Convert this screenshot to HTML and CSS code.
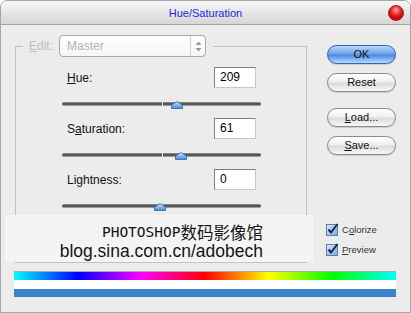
FILE: index.html
```html
<!DOCTYPE html>
<html lang="en">
<head>
    <meta charset="UTF-8">
    <title>Hue/Saturation</title>
    <link rel="stylesheet" href="styles.css">
</head>
<body>
    <div class="window">
        <div class="titlebar">
            <span class="title">Hue/Saturation</span>
            <span class="close"></span>
        </div>

        <div class="main">
            <fieldset class="group">
                <legend>
                    <span class="edit-label"><u>E</u>dit:</span>
                    <span class="select">
                        <span class="select-value">Master</span>
                        <span class="select-arrows">
                            <svg width="7" height="11" viewBox="0 0 7 11"><path d="M0.5 4 L3.5 0.5 L6.5 4 Z M0.5 7 L3.5 10.5 L6.5 7 Z" fill="#9a9a9a"/></svg>
                        </span>
                    </span>
                </legend>

                <div class="ctrls">
                    <div class="ctrl-row">
                        <span class="lbl"><u>H</u>ue:</span>
                        <span class="num">209</span>
                    </div>
                    <div class="slider">
                        <div class="track"></div>
                        <span class="tick"></span>
                        <span class="thumb" style="left: 57.8%"><svg width="12" height="8" viewBox="0 0 12 8"><defs><linearGradient id="tg1" x1="0" y1="0" x2="0" y2="1"><stop offset="0" stop-color="#e4eefb"/><stop offset="0.5" stop-color="#8db5ea"/><stop offset="1" stop-color="#4f86d2"/></linearGradient></defs><path d="M0.5 7.5 V4.2 L6 0.5 L11.5 4.2 V7.5 Z" fill="url(#tg1)" stroke="#4a74ad"/></svg></span>
                    </div>

                    <div class="ctrl-row">
                        <span class="lbl">S<u>a</u>turation:</span>
                        <span class="num">61</span>
                    </div>
                    <div class="slider">
                        <div class="track"></div>
                        <span class="tick"></span>
                        <span class="thumb" style="left: 59.8%"><svg width="12" height="8" viewBox="0 0 12 8"><path d="M0.5 7.5 V4.2 L6 0.5 L11.5 4.2 V7.5 Z" fill="url(#tg1)" stroke="#4a74ad"/></svg></span>
                    </div>

                    <div class="ctrl-row">
                        <span class="lbl">Li<u>g</u>htness:</span>
                        <span class="num">0</span>
                    </div>
                    <div class="slider">
                        <div class="track"></div>
                        <span class="tick"></span>
                        <span class="thumb" style="left: 49.2%"><svg width="12" height="8" viewBox="0 0 12 8"><path d="M0.5 7.5 V4.2 L6 0.5 L11.5 4.2 V7.5 Z" fill="url(#tg1)" stroke="#4a74ad"/></svg></span>
                    </div>
                </div>
            </fieldset>

            <div class="side">
                <div class="btn btn-ok">OK</div>
                <div class="btn btn-reset">Reset</div>
                <div class="btn btn-load"><u>L</u>oad...</div>
                <div class="btn btn-save"><u>S</u>ave...</div>

                <div class="checks">
                    <div class="check">
                        <svg width="13" height="13" viewBox="0 0 13 13"><defs><linearGradient id="cb" x1="0" y1="0" x2="1" y2="1"><stop offset="0" stop-color="#dfe9f8"/><stop offset="1" stop-color="#7fa6dc"/></linearGradient></defs><rect x="0.5" y="1.5" width="11" height="11" fill="url(#cb)" stroke="#5d7fae"/><path d="M2.5 6.5 L5 9.5 L11.5 1" fill="none" stroke="#18254a" stroke-width="2"/></svg>
                        <span>C<u>o</u>lorize</span>
                    </div>
                    <div class="check">
                        <svg width="13" height="13" viewBox="0 0 13 13"><rect x="0.5" y="1.5" width="11" height="11" fill="url(#cb)" stroke="#5d7fae"/><path d="M2.5 6.5 L5 9.5 L11.5 1" fill="none" stroke="#18254a" stroke-width="2"/></svg>
                        <span><u>P</u>review</span>
                    </div>
                </div>
            </div>
        </div>

        <div class="bars">
            <div class="bar-hue"></div>
            <div class="bar-white"></div>
            <div class="bar-result"></div>
        </div>

        <!-- watermark over the dialog -->
        <div class="watermark">
            <div class="wm-line1"><span class="wm-latin">PHOTOSHOP</span><span class="wm-cn">数码影像馆</span></div>
            <div class="wm-line2">blog.sina.com.cn/adobech</div>
        </div>
    </div>
</body>
</html>
```

FILE: styles.css
```css
body {
    margin: 0;
    background-color: #fff;
    font-family: "Liberation Sans", Arial, sans-serif;
    color: #000;
}
.window {
    position: relative;
    width: 411px;
    height: 313px;
    box-sizing: border-box;
    border: 1px solid #a6a6a6;
    border-radius: 7px 7px 0 0;
    background-color: #ececec;
    overflow: hidden;
}
.titlebar {
    height: 23px;
    border-bottom: 1px solid #a3a3a3;
    background: linear-gradient(#f7f7f7, #d6d6d6);
    display: grid;
    grid-template-columns: 1fr auto 1fr;
    align-items: center;
}
.title {
    grid-column: 2;
    color: #2424e8;
    font-size: 11px;
}
.close {
    grid-column: 3;
    justify-self: end;
    margin-right: 6px;
    width: 14px;
    height: 14px;
    border-radius: 50%;
    border: 1px solid #9b2020;
    background: radial-gradient(circle at 50% 30%, #ffb0b0 0, #f03030 35%, #c80000 70%, #e84a4a 100%);
}
.main {
    display: flex;
    height: 246px;
}
.group {
    margin: 10px 0 0 14px;
    padding: 0 0 0 7px;
    width: 292px;
    height: 228px;
    min-width: 0;
    box-sizing: border-box;
    border: 1px solid #c2c2c2;
}
.group legend {
    padding: 0 7px 0 6px;
    font-size: 0;
}
.edit-label {
    display: inline-block;
    vertical-align: middle;
    font-size: 12px;
    color: #bcbcbc;
    margin-right: 6px;
}
.select {
    display: inline-flex;
    vertical-align: middle;
    width: 147px;
    height: 22px;
    box-sizing: border-box;
    border: 1px solid #aaaaaa;
    border-radius: 4px;
    background: linear-gradient(#ffffff, #f6f6f6);
}
.select-value {
    flex: 1;
    font-size: 12px;
    line-height: 20px;
    color: #b3b3b3;
    padding-left: 7px;
}
.select-arrows {
    width: 14px;
    border-left: 1px solid #cfcfcf;
    display: flex;
    align-items: center;
    justify-content: center;
}
.ctrls {
    margin: 10px 0 0 39px;
    width: 199px;
}
.ctrl-row {
    display: flex;
    justify-content: space-between;
    align-items: center;
    height: 21px;
    padding: 0 5px;
}
.lbl {
    font-size: 12px;
    color: #111;
}
.num {
    width: 42px;
    height: 21px;
    box-sizing: border-box;
    border: 1px solid #7e7e7e;
    border-right-color: #c8c8c8;
    border-bottom-color: #c8c8c8;
    background-color: #fff;
    font-size: 12px;
    line-height: 19px;
    padding-left: 5px;
}
.slider {
    position: relative;
    height: 30px;
}
.track {
    position: relative;
    top: 14px;
    height: 4px;
    border-radius: 2px;
    background: linear-gradient(#9a9a9a, #4a4a4a 45%, #5e5e5e 70%, #c4c4c4);
}
.tick {
    position: absolute;
    left: 50%;
    top: 12px;
    width: 1px;
    height: 8px;
    background-color: #e2e2e2;
}
.thumb {
    position: absolute;
    top: 13px;
    width: 12px;
    height: 8px;
    transform: translateX(-50%);
}
.thumb svg {
    display: block;
}
.side {
    margin-left: 20px;
    width: 69px;
    padding-top: 20px;
    display: flex;
    flex-direction: column;
}
.btn {
    height: 19px;
    box-sizing: border-box;
    border: 1px solid #8b8b8b;
    border-radius: 10px;
    background: linear-gradient(#ffffff, #f0f0f0 45%, #dcdcdc 55%, #f7f7f7);
    box-shadow: 0 1px 1px rgba(0, 0, 0, 0.15);
    font-size: 11px;
    line-height: 17px;
    text-align: center;
    color: #111;
}
.btn-ok {
    border-color: #3064b4;
    background: linear-gradient(#b9d6f8, #6da3ea 45%, #4d8be0 55%, #b5dcfb);
}
.btn-reset {
    margin-top: 9px;
}
.btn-load {
    margin-top: 16px;
}
.btn-save {
    margin-top: 9px;
}
.checks {
    margin-top: 67px;
    margin-left: -1px;
    display: flex;
    flex-direction: column;
    gap: 6px;
}
.check {
    display: flex;
    align-items: center;
    gap: 3px;
    height: 14px;
    font-size: 9.5px;
    color: #333;
}
.check svg {
    display: block;
}
.bars {
    margin: 0 14px 0 13px;
    border-top: 1px solid #a8a8a8;
}
.bar-hue {
    height: 8px;
    background: linear-gradient(to right, #00ffff, #0000ff 16.67%, #ff00ff 33.33%, #ff0000 50%, #ffff00 66.67%, #00ff00 83.33%, #00ffff);
}
.bar-white {
    height: 9px;
    background-color: #fff;
}
.bar-result {
    height: 8px;
    background-color: #3a82cc;
}
.watermark {
    position: absolute;
    left: 4px;
    top: 214px;
    width: 308px;
    height: 47px;
    box-sizing: border-box;
    padding: 8px 50px 0 0;
    background-color: #f4f4f4;
    text-align: right;
    color: #141414;
}
.wm-line1 {
    display: flex;
    justify-content: flex-end;
    align-items: center;
    height: 18px;
    white-space: nowrap;
}
.wm-latin {
    font-family: "DejaVu Sans Mono", monospace;
    font-size: 14.5px;
    line-height: 18px;
}
.wm-cn {
    font-family: "Noto Sans CJK SC", sans-serif;
    font-size: 16.5px;
    line-height: 18px;
}
.wm-line2 {
    height: 20px;
    line-height: 20px;
    font-size: 17.5px;
    white-space: nowrap;
}
```
